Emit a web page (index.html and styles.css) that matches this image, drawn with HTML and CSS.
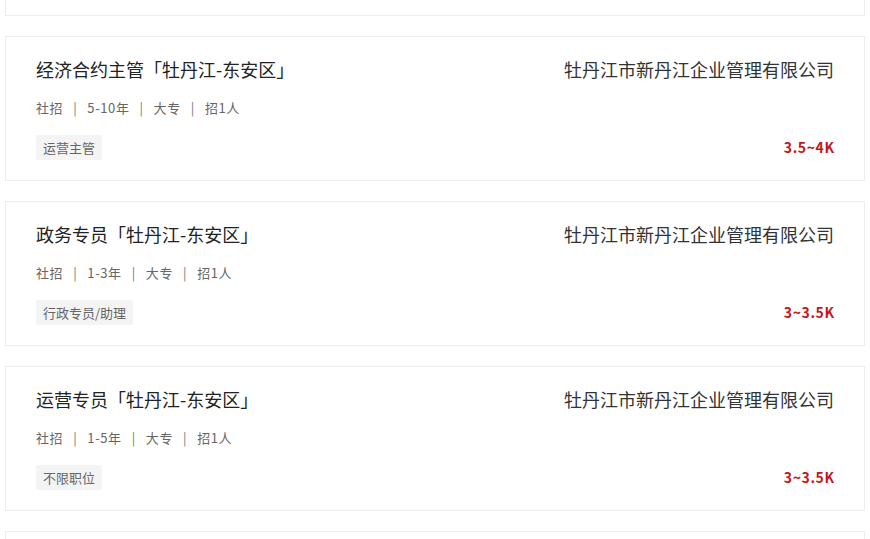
FILE: index.html
```html
<!DOCTYPE html>
<html lang="zh-CN">
<head>
<meta charset="utf-8">
<title>职位列表</title>
<link rel="stylesheet" href="styles.css">
</head>
<body>
<div class="list">
  <div class="card">
    <div class="left">
      <div class="title">行政专员「牡丹江-东安区」</div>
      <div class="meta"><span>社招</span><span class="sep">|</span><span>1-3年</span><span class="sep">|</span><span>大专</span><span class="sep">|</span><span>招1人</span></div>
      <div class="tags"><span class="tag">行政专员/助理</span></div>
    </div>
    <div class="right">
      <div class="company">牡丹江市新丹江企业管理有限公司</div>
      <div class="salary">3~3.5K</div>
    </div>
  </div>
  <div class="card">
    <div class="left">
      <div class="title">经济合约主管「牡丹江-东安区」</div>
      <div class="meta"><span>社招</span><span class="sep">|</span><span>5-10年</span><span class="sep">|</span><span>大专</span><span class="sep">|</span><span>招1人</span></div>
      <div class="tags"><span class="tag">运营主管</span></div>
    </div>
    <div class="right">
      <div class="company">牡丹江市新丹江企业管理有限公司</div>
      <div class="salary">3.5~4K</div>
    </div>
  </div>
  <div class="card">
    <div class="left">
      <div class="title">政务专员「牡丹江-东安区」</div>
      <div class="meta"><span>社招</span><span class="sep">|</span><span>1-3年</span><span class="sep">|</span><span>大专</span><span class="sep">|</span><span>招1人</span></div>
      <div class="tags"><span class="tag">行政专员/助理</span></div>
    </div>
    <div class="right">
      <div class="company">牡丹江市新丹江企业管理有限公司</div>
      <div class="salary">3~3.5K</div>
    </div>
  </div>
  <div class="card">
    <div class="left">
      <div class="title">运营专员「牡丹江-东安区」</div>
      <div class="meta"><span>社招</span><span class="sep">|</span><span>1-5年</span><span class="sep">|</span><span>大专</span><span class="sep">|</span><span>招1人</span></div>
      <div class="tags"><span class="tag">不限职位</span></div>
    </div>
    <div class="right">
      <div class="company">牡丹江市新丹江企业管理有限公司</div>
      <div class="salary">3~3.5K</div>
    </div>
  </div>
  <div class="card">
    <div class="left">
      <div class="title">运营主管「牡丹江-东安区」</div>
      <div class="meta"><span>社招</span><span class="sep">|</span><span>3-5年</span><span class="sep">|</span><span>大专</span><span class="sep">|</span><span>招1人</span></div>
      <div class="tags"><span class="tag">运营主管</span></div>
    </div>
    <div class="right">
      <div class="company">牡丹江市新丹江企业管理有限公司</div>
      <div class="salary">4~5K</div>
    </div>
  </div>
</div>
</body>
</html>
```
FILE: styles.css
```css
html, body {
  margin: 0;
  padding: 0;
  background: #ffffff;
  overflow: hidden;
}
body {
  font-family: "Noto Sans CJK SC", "Noto Sans", "Liberation Sans", sans-serif;
  color: #333;
}
.list {
  display: flex;
  flex-direction: column;
  gap: 20px;
  margin-top: -129px;
  padding: 0 5px;
}
.card {
  display: flex;
  justify-content: space-between;
  border: 1px solid #ededed;
  padding: 19px 30px 20px 30px;
  background: #fff;
}
.left {
  display: flex;
  flex-direction: column;
}
.title {
  font-size: 18px;
  line-height: 26px;
  color: #222;
}
.meta {
  margin-top: 16px;
  font-size: 13px;
  line-height: 20px;
  color: #666;
  display: flex;
  align-items: center;
  letter-spacing: 0.6px;
}
.sep {
  margin: 0 10px;
  color: #777;
}
.tags {
  margin-top: 17px;
  display: flex;
}
.tag {
  font-size: 13px;
  line-height: 25px;
  height: 25px;
  padding: 0 7px;
  background: #f4f4f4;
  color: #666;
  border-radius: 2px;
}
.right {
  display: flex;
  flex-direction: column;
  justify-content: space-between;
  align-items: flex-end;
}
.company {
  font-size: 18px;
  line-height: 26px;
  color: #333;
}
.salary {
  font-size: 14px;
  line-height: 25px;
  font-weight: bold;
  color: #c4161c;
  letter-spacing: 0.6px;
  margin-right: -0.6px;
}
```
